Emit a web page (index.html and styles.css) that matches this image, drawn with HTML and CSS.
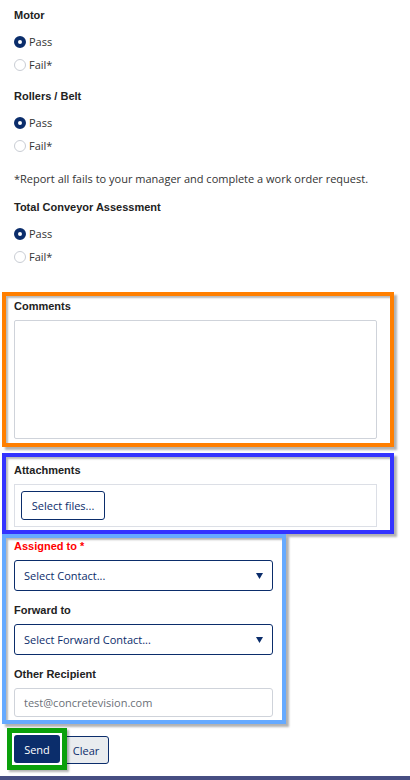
FILE: index.html
```html
<!DOCTYPE html>
<html>
<head>
<meta charset="utf-8">
<link rel="stylesheet" href="styles.css">
</head>
<body>
<div class="page">
  <div class="group">
    <div class="label">Motor</div>
    <label class="radio"><span class="dot on"></span>Pass</label>
    <label class="radio"><span class="dot"></span>Fail*</label>
  </div>
  <div class="group">
    <div class="label">Rollers / Belt</div>
    <label class="radio"><span class="dot on"></span>Pass</label>
    <label class="radio"><span class="dot"></span>Fail*</label>
  </div>
  <p class="note">*Report all fails to your manager and complete a work order request.</p>
  <div class="group g3">
    <div class="label">Total Conveyor Assessment</div>
    <label class="radio"><span class="dot on"></span>Pass</label>
    <label class="radio"><span class="dot"></span>Fail*</label>
  </div>

  <section class="box orange">
    <div class="label">Comments</div>
    <div class="textarea"></div>
  </section>

  <section class="box blue">
    <div class="label">Attachments</div>
    <div class="upload"><span class="btn-files">Select files...</span></div>
  </section>

  <section class="box lightblue">
    <div class="label red">Assigned to *</div>
    <div class="select"><span>Select Contact...</span><svg width="7" height="6" viewBox="0 0 7 6"><path d="M0 0H7L3.5 6Z" fill="#0b2d6b"/></svg></div>
    <div class="label mt">Forward to</div>
    <div class="select"><span>Select Forward Contact...</span><svg width="7" height="6" viewBox="0 0 7 6"><path d="M0 0H7L3.5 6Z" fill="#0b2d6b"/></svg></div>
    <div class="label mt">Other Recipient</div>
    <div class="input">test@concretevision.com</div>
  </section>

  <div class="actions">
    <span class="highlight"><span class="btn send">Send</span></span>
    <span class="btn clear">Clear</span>
  </div>
</div>
<div class="bottombar"></div>
</body>
</html>
```
FILE: styles.css
```css
* { box-sizing: border-box; }
body {
  margin: 0;
  background: #fff;
  font-family: "Open Sans", "Noto Sans", sans-serif;
  font-size: 11px;
  color: #222;
}
.page { padding: 8px 0 0 0; }
.group { padding-left: 14px; display: flex; flex-direction: column; }
.group + .group { margin-top: 13px; }
.label {
  font-family: "Liberation Sans", Arial, sans-serif;
  font-weight: bold;
  font-size: 11px;
  line-height: 14px;
  height: 14px;
  color: #222;
}
.group .label { margin-bottom: 8px; }
.radio {
  display: flex;
  align-items: center;
  height: 23px;
  color: #333;
  font-size: 11px;
}
.dot {
  width: 12px;
  height: 12px;
  border-radius: 50%;
  border: 1px solid #c9cdd4;
  background: #fff;
  margin-right: 3px;
  flex: none;
}
.dot.on {
  border: 4px solid #0b2d6b;
  background: #fff;
}
.note {
  margin: 14px 0 13px 14px;
  line-height: 16px;
  font-size: 11px;
  color: #333;
}
.g3 { margin-top: 0; }

.box {
  border: 4px solid;
  box-shadow: 3px 3px 2px rgba(0,0,0,0.3), inset 2px 2px 2px rgba(0,0,0,0.28);
}
.orange {
  margin: 24px 0 0 2px;
  width: 392px;
  border-color: #ff7f00;
  padding: 3px 13px 4px 8px;
}
.textarea {
  margin-top: 7px;
  height: 119px;
  border: 1px solid #cfd3da;
  border-radius: 2px;
}
.blue {
  margin: 6px 0 0 2px;
  width: 392px;
  border-color: #3333ff;
  padding: 6px 13px 3px 8px;
}
.upload {
  margin-top: 7px;
  height: 43px;
  border: 1px solid #dcdfe6;
  padding: 6px;
}
.btn-files {
  display: inline-flex;
  align-items: center;
  justify-content: center;
  width: 84px;
  height: 29px;
  border: 1px solid #0b2d6b;
  border-radius: 3px;
  color: #0b2d6b;
}
.lightblue {
  margin: 0 0 0 2px;
  width: 284px;
  border-color: #66aaff;
  padding: 1px 9px 3px 8px;
}
.red { color: #ff0000; }
.label.mt { margin-top: 12px; }
.select {
  margin-top: 7px;
  height: 31px;
  border: 1px solid #0b2d6b;
  border-radius: 3px;
  display: flex;
  align-items: center;
  justify-content: space-between;
  padding: 0 9px 0 9px;
  color: #0b2d6b;
}
.input {
  margin-top: 7px;
  height: 29px;
  border: 1px solid #cfd3da;
  border-radius: 3px;
  display: flex;
  align-items: center;
  padding: 0 9px;
  color: #6b7078;
}
.actions {
  display: flex;
  align-items: flex-start;
  margin: 4px 0 0 7px;
}
.highlight {
  display: flex;
  border: 5px solid #0aa00a;
  padding: 2px;
  position: relative;
  z-index: 1;
  box-shadow: 2px 2px 2px rgba(0,0,0,0.3);
}
.btn {
  display: inline-flex;
  align-items: center;
  justify-content: center;
  height: 28px;
  border-radius: 3px;
}
.send {
  width: 46px;
  background: #0b2d6b;
  color: #fff;
}
.clear {
  width: 46px;
  margin-left: -4px;
  margin-top: 8px;
  background: #e9ecef;
  border: 1px solid #0b2d6b;
  color: #0b2d6b;
}
.bottombar {
  margin-top: 6px;
  height: 10px;
  background: #474e82;
}
```
